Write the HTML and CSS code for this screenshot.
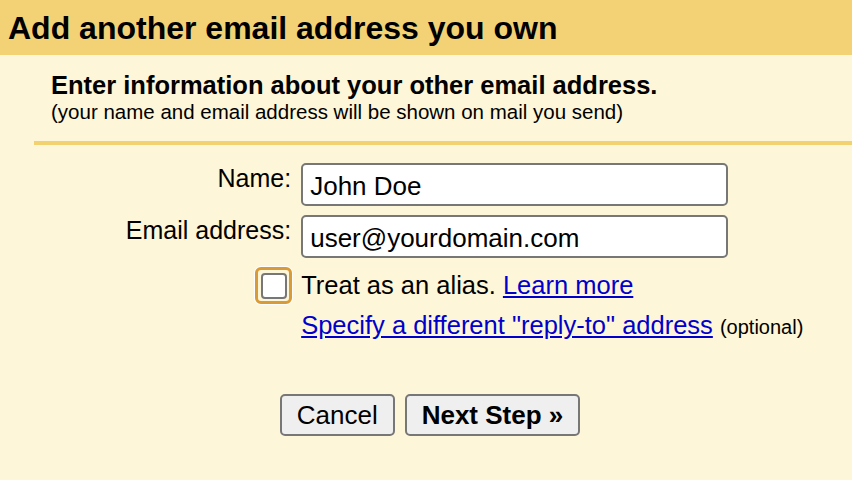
FILE: index.html
```html
<!DOCTYPE html>
<html>
<head>
<meta charset="utf-8">
<link rel="stylesheet" href="styles.css">
</head>
<body>
<div class="header"><h1 class="title">Add another email address you own</h1></div>
<div class="intro">
  <div class="intro-head">Enter information about your other email address.</div>
  <div class="intro-sub">(your name and email address will be shown on mail you send)</div>
</div>
<div class="divider"></div>
<div class="form">
  <label class="label">Name:</label>
  <div class="field"><input class="input" type="text" value="John Doe"></div>
  <label class="label">Email address:</label>
  <div class="field"><input class="input" type="text" value="user@yourdomain.com"></div>
  <div class="check-cell"><span class="focus-ring"><span class="box"></span></span></div>
  <div class="alias">Treat as an alias. <a class="link" href="#">Learn more</a></div>
  <div></div>
  <div class="reply"><a class="link" href="#">Specify a different "reply-to" address</a> <span class="optional">(optional)</span></div>
</div>
<div class="buttons">
  <button class="btn">Cancel</button>
  <button class="btn btn-bold">Next Step »</button>
</div>
</body>
</html>
```
FILE: styles.css
```css
html, body {
  margin: 0;
  padding: 0;
  background: #fef6d8;
  font-family: "Liberation Sans", Arial, sans-serif;
  color: #000;
  width: 852px;
  height: 480px;
  overflow: hidden;
}
.header {
  background: #f3d275;
  height: 55px;
  padding: 0 0 0 8px;
  box-sizing: border-box;
}
.title {
  margin: 0;
  font-size: 32px;
  font-weight: bold;
  line-height: 55px;
  padding-top: 1px;
}
.intro {
  padding: 15px 0 0 51px;
}
.intro-head {
  font-size: 25.5px;
  font-weight: bold;
  line-height: 30px;
}
.intro-sub {
  font-size: 20.5px;
  line-height: 24px;
}
.divider {
  margin: 17px 0 0 34px;
  height: 4px;
  background: #f2d171;
}
.form {
  display: grid;
  grid-template-columns: auto 427px;
  column-gap: 10px;
  justify-content: center;
  margin-top: 18px;
  padding-left: 2px;
}
.label {
  text-align: right;
  font-size: 25px;
  line-height: 30px;
}
.field {
  margin-bottom: 9px;
}
.input {
  box-sizing: border-box;
  width: 427px;
  height: 43px;
  border: 2px solid #777;
  border-radius: 5px;
  background: #fff;
  font-family: "Liberation Sans", Arial, sans-serif;
  font-size: 26px;
  padding: 4px 0 0 7px;
  margin: 0;
  color: #000;
  outline: none;
}
.check-cell {
  display: flex;
  justify-content: flex-end;
}
.focus-ring {
  box-sizing: border-box;
  width: 37px;
  height: 37px;
  border: 3px solid #d99a38;
  border-radius: 6px;
  box-shadow: 0 0 0 1px #fff;
  display: flex;
  align-items: center;
  justify-content: center;
  margin-right: -1px;
}
.box {
  box-sizing: border-box;
  width: 26px;
  height: 26px;
  border: 2px solid #777;
  border-radius: 4px;
  background: #fff;
}
.alias {
  font-size: 25.5px;
  line-height: 37px;
  white-space: nowrap;
}
.reply {
  font-size: 25.5px;
  line-height: 30px;
  margin-top: 6px;
  white-space: nowrap;
}
.link {
  color: #0000cc;
  text-decoration: underline;
}
.optional {
  font-size: 20px;
}
.buttons {
  display: flex;
  justify-content: center;
  gap: 10px;
  margin-top: 52px;
  padding-left: 8px;
}
.btn {
  box-sizing: border-box;
  height: 42px;
  border: 2px solid #777;
  border-radius: 5px;
  background: #efefef;
  font-family: "Liberation Sans", Arial, sans-serif;
  font-size: 26px;
  color: #000;
  padding: 0 15px;
  margin: 0;
}
.btn-bold {
  font-weight: bold;
}
```
